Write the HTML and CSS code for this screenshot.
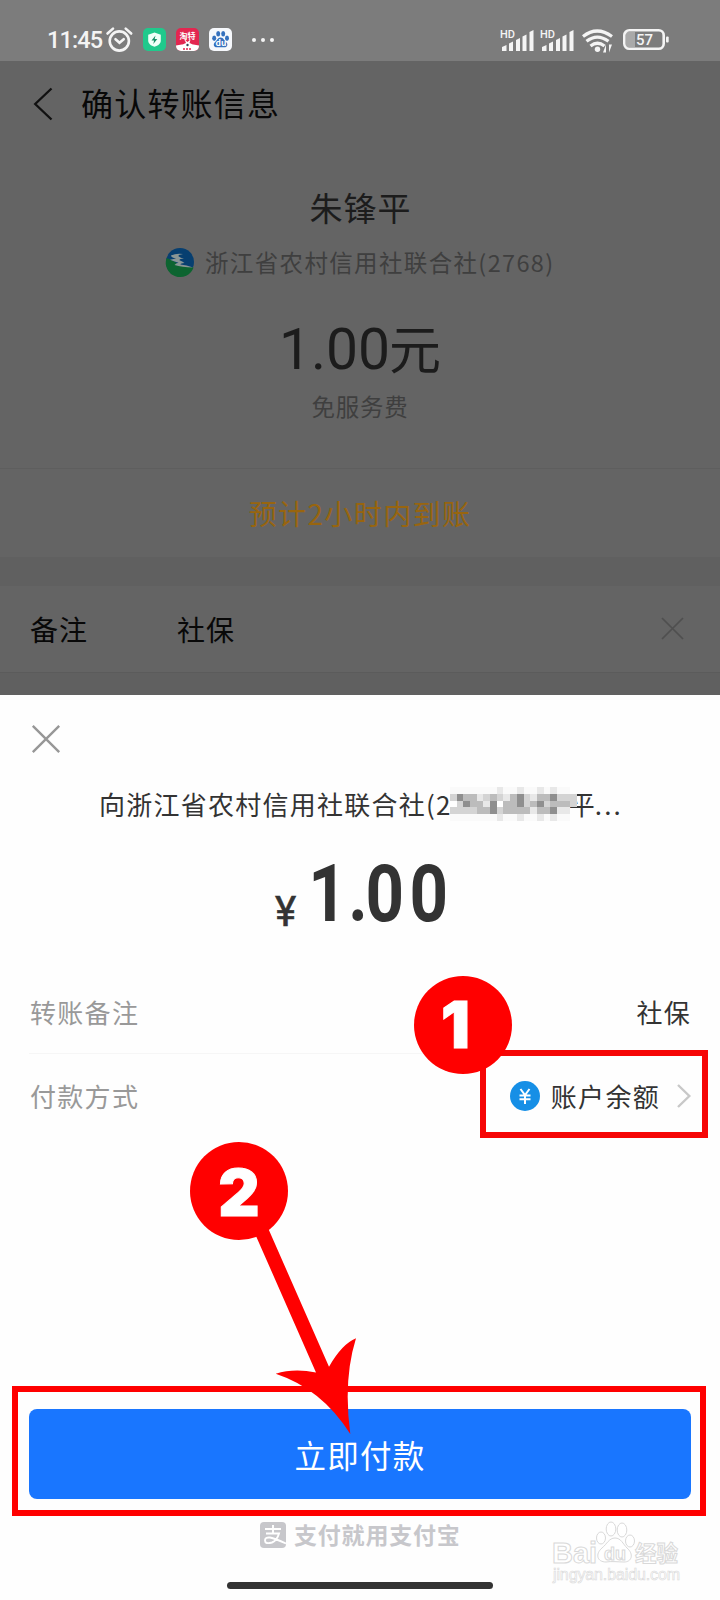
FILE: index.html
```html
<!DOCTYPE html>
<html lang="zh-CN">
<head>
<meta charset="utf-8">
<title>确认转账信息</title>
<link rel="stylesheet" href="styles.css">
</head>
<body>
<div class="screen">
  <header class="status">
    <span class="time">11:45</span>
    <svg class="alarm" width="27" height="26" viewBox="0 0 27 26" fill="none" stroke="#f4f4f4" stroke-width="2.6" stroke-linecap="round"><circle cx="13.3" cy="14" r="9.6"/><path d="M9.5 12.2l4 3.6 4.2-3.6M1.5 6.5L7 1.6M25.2 6.5L19.7 1.6"/></svg>
    <svg class="app" width="23" height="23" viewBox="0 0 23 23"><rect width="23" height="23" rx="5" fill="#20c98c"/><path d="M11.5 4.5l6.3 2.2v5.8c0 3.2-2.8 5.2-6.3 6.3-3.5-1.1-6.3-3.1-6.3-6.3V6.700z" fill="#f0fff8"/><path d="M12.500 7.500l-4 5h2.600l-.8 3.600 4-5h-2.600z" fill="#178d66"/></svg>
    <svg class="app" width="23" height="23" viewBox="0 0 23 23"><rect width="23" height="23" rx="5" fill="#e32650"/><path d="M0 17.500q11.500-3 23 0v.5a5 5 0 0 1-5 5H5a5 5 0 0 1-5-5z" fill="#fff"/><path d="M6 20q0-4 4-5l-1.500-3.500 3 2.500 3-2.500L13.500 15q4 1 4 5z" fill="#fff"/><circle cx="11.500" cy="17" r="1.200" fill="#345"/><text class="tiny" x="3.500" y="10.500" fill="#fff">淘特</text><path d="M7 21h9" stroke="#e32650" stroke-width="1.300" stroke-dasharray="2 1"/></svg>
    <svg class="app" width="23" height="23" viewBox="0 0 23 23"><rect width="23" height="23" rx="5" fill="#f6f8fc"/><g fill="#3470bd"><ellipse cx="5.200" cy="10.300" rx="2" ry="2.700"/><ellipse cx="9.200" cy="5.700" rx="2" ry="2.700"/><ellipse cx="14.200" cy="5.700" rx="2" ry="2.700"/><ellipse cx="18" cy="10.300" rx="2" ry="2.700"/><path d="M11.600 9.500c3 0 3.400 3 5.400 4.400 2.500 2 1.300 5.300-1.500 5.300H7.700c-2.900 0-4-3.300-1.500-5.300 2-1.500 2.400-4.400 5.400-4.400z"/></g><text class="tiny du" x="6.600" y="18" fill="#fff">du</text></svg>
    <span class="more"><i></i><i></i><i></i></span>
    <svg class="signals" width="170" height="26" viewBox="0 0 170 26" fill="#f4f4f4">
      <text class="hd" x="0" y="9">HD</text><path d="M2 18l4.500-2v6H2zM9 14.500l4-2V22H9zM16 11l4-2v13h-4zM22.500 7.500l4-2V22h-4zM29.500 3l4-2v21h-4z"/>
      <text class="hd" x="40" y="9">HD</text><path d="M42 18l4.500-2v6H42zM49 14.500l4-2V22h-4zM56 11l4-2v13h-4zM62.500 7.500l4-2V22h-4zM69.500 3l4-2v21h-4z"/>
      <g fill="none" stroke="#f4f4f4" stroke-width="3.200"><path d="M83 7.500q14-11 29 0M86.500 12.300q10.700-8.500 22 0M90.500 17q7-5.500 14 0"/></g><circle cx="97.500" cy="20.300" r="2.700"/><path d="M106 15.500v8h-3zM109 23.500v-8h3z"/>
      <rect x="126" y="3" width="9" height="15" fill="#a9a9a9"/><rect x="124.300" y="1.300" width="39.400" height="18.400" rx="5" fill="none" stroke="#f4f4f4" stroke-width="2.600"/><rect x="166" y="7.500" width="2.700" height="6" rx="1"/><text class="bat" x="144.500" y="16" text-anchor="middle">57</text>
    </svg>
  </header>

  <main class="confirm">
    <div class="nav"><svg width="20" height="34" viewBox="0 0 20 34" fill="none" stroke="#111" stroke-width="2.300"><path d="M18.500 1.500L2.200 17l16.300 15.500"/></svg><h1>确认转账信息</h1></div>
    <div class="payee">朱锋平</div>
    <div class="bank"><svg width="28" height="28" viewBox="0 0 28 28"><circle cx="14" cy="14" r="14" fill="#073f70"/><path d="M.6 10q6 2 10 5 4 3 17 4.500A14 14 0 1 1 .6 10z" fill="#0d6430"/><path d="M5 7.500q5-2.500 12-1.500-5 .8-4.500 2.200 2 2 5.500 2.300-5 .5-4.500 1.700 3 1 5 2.800-4.500.6-4 1.600 6 .4 12.500 3-11-.4-18.500-2.600 1.500-1.700 4-2.200-5-1.300-8.500-3 4-.8 6-1-5-1.300-5-3.300z" fill="#8a9695"/></svg><span>浙江省农村信用社联合社(2768)</span></div>
    <div class="amount"><span class="num">1.00</span><span class="yuan">元</span></div>
    <div class="fee">免服务费</div>
    <div class="eta">预计2小时内到账</div>
    <div class="band"></div>
    <div class="remark"><span class="label">备注</span><span class="value">社保</span><svg width="23" height="23" viewBox="0 0 23 23" stroke="#4f4f4f" stroke-width="1.700"><path d="M1 1l21 21M22 1L1 22"/></svg></div>
    <div class="band last"></div>
  </main>

  <section class="sheet">
    <svg class="close" width="28" height="28" viewBox="0 0 28 28" stroke="#979797" stroke-width="2.400"><path d="M.8.800l26.400 26.400M27.200.800L.8 27.200"/></svg>
    <div class="order"><span>向浙江省农村信用社联合社(2</span><svg class="mosaic" width="127" height="34" viewBox="0 0 19 5" preserveAspectRatio="none" shape-rendering="crispEdges"><path stroke="#fafafa" d="M0 .5h18M0 4.500h18"/><path stroke="#d4d4d4" d="M0 1.500h19M0 2.500h19M0 3.500h18"/><path stroke="#bcbcbc" d="M2 1.500h2M6 1.500h1M9 1.500h2M13 1.500h2M3 2.500h2M8 2.500h3M12 2.500h2M15 2.500h3M4 3.500h2M8 3.500h4M13 3.500h2"/><path stroke="#8f8f8f" d="M1 1.500h1M10 1.500h1M15 1.500h1M2 2.500h1M6 2.500h1M10 2.500h1M13 2.500h1M6 3.500h1M15 3.500h1"/><path stroke="#e8e8e8" d="M7 .5h1M10 .5h1M13 .5h1M15 .5h1M4 1.500h1M8 1.500h1M12 1.500h1M5 2.500h1M12 3.500h1M16 3.500h2M7 4.500h1M10 4.500h1M13 4.500h1M15 4.500h1"/><path stroke="#fff" d="M0 2.500h1M7 2.500h1"/></svg><span class="tail">平</span><span class="dots">...</span></div>
    <div class="total"><span class="cny">¥</span><span class="digit one">1</span><span class="digit dot">.</span><span class="digit">0</span><span class="digit">0</span></div>
    <div class="row first"><span class="label">转账备注</span><span>社保</span></div>
    <div class="row"><span class="label">付款方式</span><span class="method"><svg width="30" height="30" viewBox="0 0 30 30"><circle cx="15" cy="15" r="15" fill="#168fe6"/><path d="M10.500 8l4.500 6 4.500-6M9.500 14.500h11M9.500 18.300h11M15 14v9" fill="none" stroke="#fff" stroke-width="2"/></svg><span>账户余额</span><svg width="14" height="24" viewBox="0 0 14 24" fill="none" stroke="#c8c8c8" stroke-width="2.400"><path d="M1 1l11.300 11L1 23"/></svg></span></div>
    <button class="pay">立即付款</button>
    <div class="slogan"><svg width="26" height="26" viewBox="0 0 26 26"><rect width="26" height="26" rx="4" fill="#c7c7cb"/><path d="M5 7h16M13 3v8M6 11.500h13q-2 7-7 9-7 2-7-2 0-3.500 5-3 5 1 16 6" fill="none" stroke="#fff" stroke-width="1.900"/></svg><span>支付就用支付宝</span></div>
    <div class="home"></div>
  </section>

  <div class="mark mark-method"></div>
  <div class="mark mark-pay"></div>
  <svg class="arrow" width="110" height="220" viewBox="250 1220 110 220"><path d="M249 1220L264.500 1220 329 1366.700Q342 1344 356 1338.300Q343 1380 350.300 1434Q322 1389 275.700 1373.700Q294 1368 316 1372.500z" fill="#f00"/></svg>
  <div class="step step-one">1</div>
  <div class="step step-two">2</div>
  <svg class="watermark" width="136" height="76" viewBox="550 1518 136 76" fill="#fff" stroke="#d9d9d9" stroke-width="1">
    <text class="wm-big" x="552" y="1563">Bai</text>
    <ellipse cx="601" cy="1538" rx="4.500" ry="6"/><ellipse cx="611" cy="1529" rx="4.800" ry="7"/><ellipse cx="622" cy="1530" rx="4.800" ry="7"/><ellipse cx="630" cy="1541" rx="4.500" ry="6"/>
    <path d="M615 1538c6 0 8 6 12 10 7 6 5 14-3 14-5 0-13-1-18 0-9 0-11-8-4-14 5-4 7-10 13-10z"/>
    <text class="wm-du" x="604" y="1560">du</text><text class="wm-cn" x="635" y="1561">经验</text>
    <text class="wm-url" x="553" y="1580" textLength="127">jingyan.baidu.com</text>
  </svg>
</div>
</body>
</html>
```
FILE: styles.css
```css
* { box-sizing: border-box; }
body { margin: 0; background: #fff; }
svg { overflow: visible; }
.screen { position: relative; width: 720px; height: 1600px; overflow: hidden; font-family: "Noto Sans CJK SC", sans-serif; background: #fefefe; }

.status { display: flex; align-items: center; height: 61px; padding: 18px 50px 0 47px; background: #7c7c7c; color: #f4f4f4; }
.time { width: 55px; font: 500 23.500px/24px Roboto, sans-serif; letter-spacing: -.9px; white-space: nowrap; }
.alarm { margin-left: 4px; }
.app { margin-left: 10px; }
.alarm + .app { margin-left: 10px; }
.tiny { font: 700 8px "Noto Sans CJK SC", sans-serif; }
.du { font-size: 8.500px; }
.more { display: flex; gap: 5px; margin-left: 20px; }
.more i { width: 4px; height: 4px; border-radius: 50%; background: #f4f4f4; }
.signals { flex: none; margin: 5px 0 0 auto; }
.hd { font: 500 11px Roboto, sans-serif; }
.bat { font: 500 15px Roboto, sans-serif; }

.confirm { height: 634px; background: #646464; color: #1c1c1c; text-align: center; }
.nav { display: flex; align-items: center; height: 86px; padding-left: 33px; color: #080808; }
.nav h1 { margin: -4px 0 0 28px; font-size: 32px; font-weight: 400; letter-spacing: 1.200px; line-height: 48px; }
.payee { height: 91px; padding: 35px 0 0 1px; font-size: 33px; line-height: 50px; letter-spacing: 1px; }
.bank { display: flex; align-items: center; height: 50px; padding-left: 166px; color: #3f3f3f; font-size: 23.500px; letter-spacing: 1.350px; line-height: 34px; white-space: nowrap; }
.bank svg { margin-top: -2px; }
.bank span { margin: -3px 0 0 11px; }
.amount { display: flex; justify-content: center; align-items: baseline; height: 97px; padding-top: 20px; line-height: 78px; }
.num { font-family: Roboto, sans-serif; font-size: 57px; }
.yuan { margin-left: -1px; font-size: 52px; }
.fee { height: 83px; padding-top: 1px; color: #3f3f3f; font-size: 23.500px; line-height: 40px; letter-spacing: .8px; }
.eta { height: 89px; border-top: 1px solid #5e5e5e; color: #98650f; font-size: 28px; line-height: 88px; letter-spacing: 1.400px; }
.band { height: 29px; background: #606060; }
.band.last { height: 22px; }
.remark { display: flex; align-items: center; height: 87px; padding: 0 36px 1px 30px; border-bottom: 1px solid #5b5b5b; color: #080808; font-size: 28px; letter-spacing: 1px; }
.remark .label { width: 147px; text-align: left; }
.remark svg { margin-left: auto; }

.sheet { height: 905px; padding: 30px 29px 0; background: #fefefe; color: #333; }
.close { display: block; margin-left: 3px; }
.order { display: flex; align-items: center; height: 40px; margin: 31px 0 0 70px; font-size: 26px; letter-spacing: 1.250px; line-height: 40px; white-space: nowrap; }
.mosaic { position: relative; z-index: 1; flex: none; margin: 0 -8px 0 -2px; }
.tail { width: 26px; }
.dots { letter-spacing: 2.200px; }
.total { display: flex; align-items: baseline; height: 94px; margin: 23px 0 0 246px; font-family: Roboto, sans-serif; line-height: 94px; white-space: nowrap; }
.cny { width: 30px; font-size: 42px; font-weight: 400; -webkit-text-stroke: .6px #353535; transform: translateY(5px) scaleX(.96); transform-origin: left; }
.digit { width: 44px; font-size: 80px; font-weight: 700; text-align: center; transform: scaleX(.84); }
.digit.one { width: 42px; }
.digit.dot { width: 15px; }
.row { display: flex; justify-content: space-between; align-items: center; height: 84px; font-size: 26px; letter-spacing: 1.300px; line-height: 40px; padding: 0 0 1px 1px; }
.row.first { height: 82px; margin-top: 31px; border-bottom: 1px solid #f6f6f6; }
.row .label { color: #999; }
.method { display: flex; align-items: center; }
.method span { margin: 0 17px 0 11px; }
.pay { display: block; width: 662px; height: 90px; margin: 271px 0 0; padding: 0; border: 0; border-radius: 8px; background: #1976ff; color: #fff; font: 400 31.500px/88px "Noto Sans CJK SC", sans-serif; letter-spacing: 1.200px; }
.slogan { display: flex; align-items: center; height: 40px; margin: 16px 0 0 231px; color: #c7c7cb; font-size: 23px; font-weight: 700; letter-spacing: .8px; }
.slogan span { margin: -3px 0 0 8px; }
.home { width: 266px; height: 7px; margin: 27px 0 0 198px; border-radius: 4px; background: #333; }

.mark { position: absolute; border: 6px solid #f60606; }
.mark-method { left: 480px; top: 1050px; width: 228px; height: 88px; }
.mark-pay { left: 12px; top: 1386px; width: 694px; height: 130px; border-color: #f00; }
.arrow { position: absolute; left: 250px; top: 1220px; }
.step { position: absolute; width: 98px; height: 98px; border-radius: 50%; background: #f00; color: #fff; font: 900 64px/98px Inter, sans-serif; text-align: center; -webkit-text-stroke: 1px #fff; }
.step-one { left: 414px; top: 976px; padding-right: 15px; }
.step-two { left: 190px; top: 1142px; padding-top: 2px; }
.watermark { position: absolute; left: 550px; top: 1518px; }
.wm-big { font: 700 29px "Liberation Sans", sans-serif; }
.wm-du { font: 700 18px "Liberation Sans", sans-serif; }
.wm-cn { font: 700 21.500px "Noto Sans CJK SC", sans-serif; }
.wm-url { font: 400 16px "Liberation Sans", sans-serif; stroke-width: .6px; }
```
